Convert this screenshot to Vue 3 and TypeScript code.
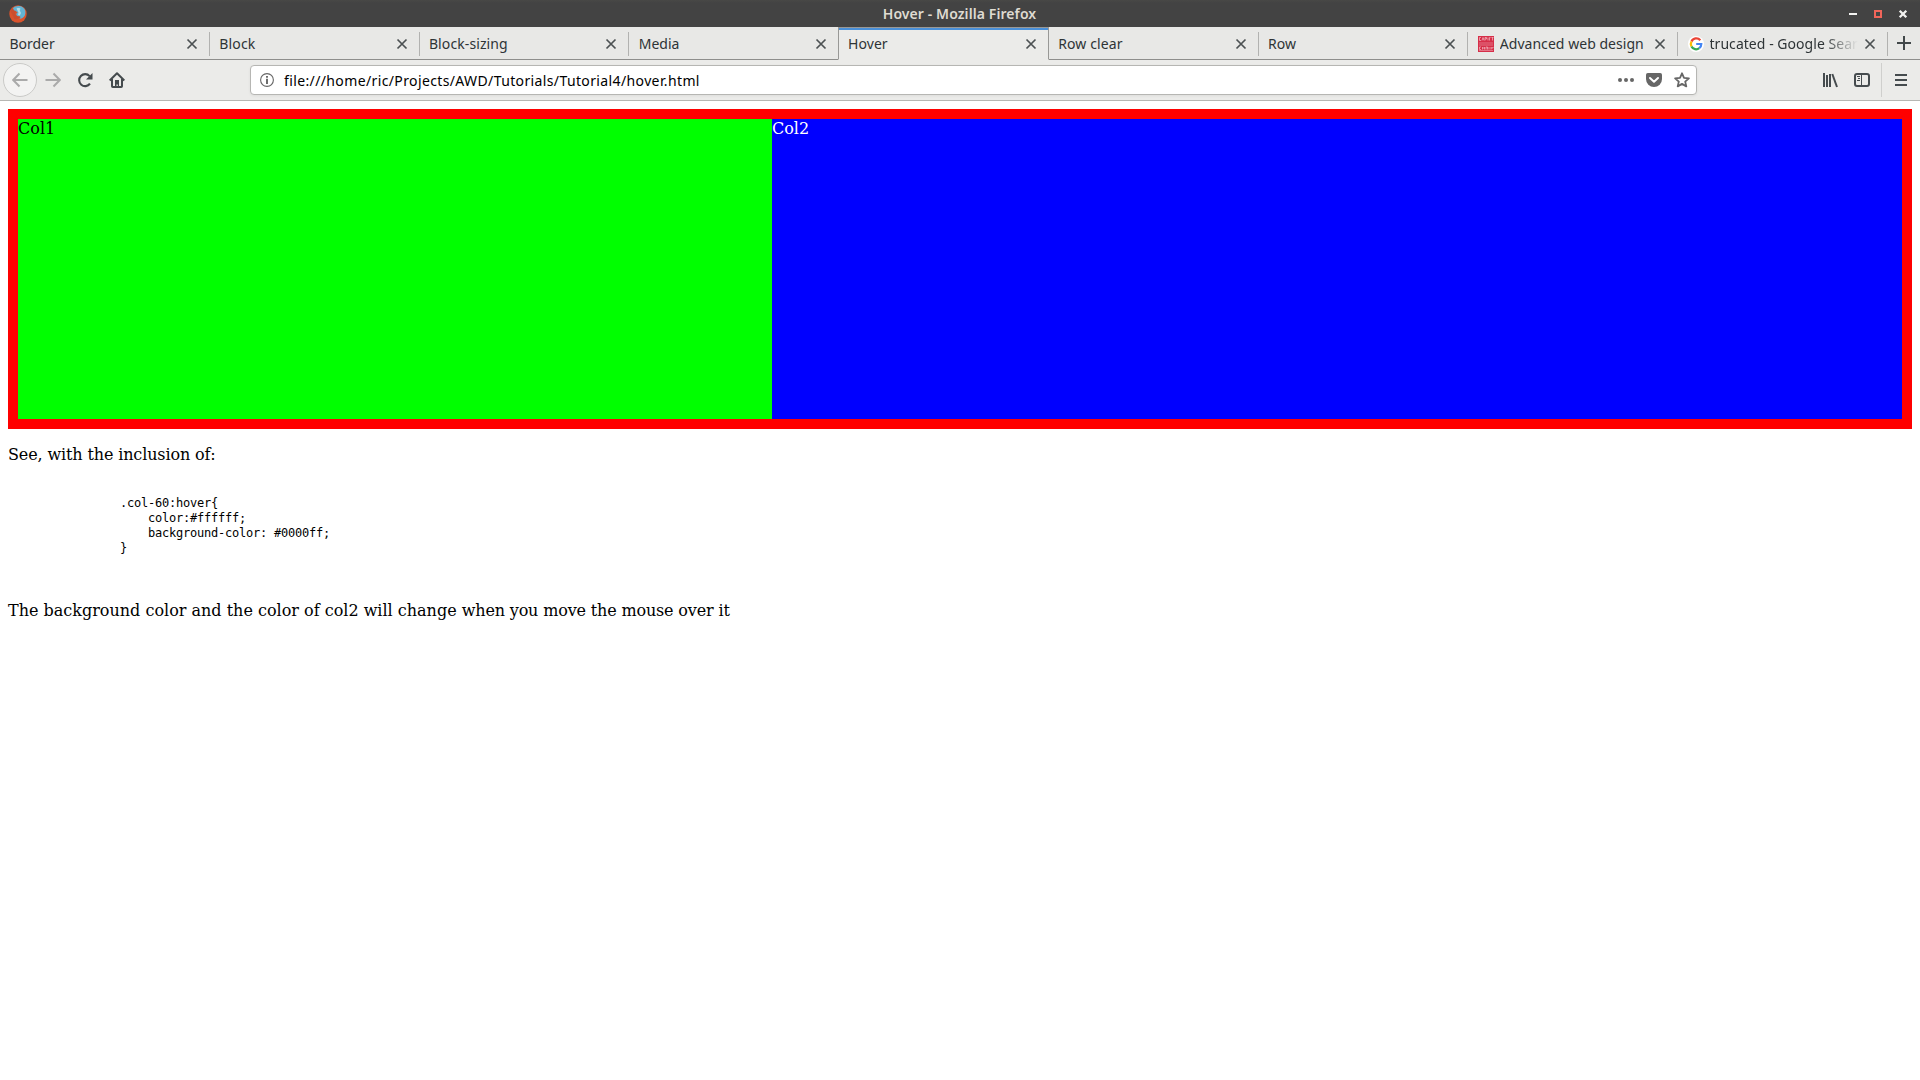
<script setup lang="ts">
interface Tab {
  title: string
  icon?: 'cardiff' | 'google'
  active?: boolean
  spacing: number
}

const tabs: Tab[] = [
  { title: 'Border', spacing: 0 },
  { title: 'Block', spacing: 0.2 },
  { title: 'Block-sizing', spacing: 0.1 },
  { title: 'Media', spacing: 0 },
  { title: 'Hover', active: true, spacing: 0.05 },
  { title: 'Row clear', spacing: 0.12 },
  { title: 'Row', spacing: 0.1 },
  { title: 'Advanced web design', icon: 'cardiff', spacing: 0.04 },
  { title: 'trucated - Google Search', icon: 'google', spacing: 0.04 },
]

const code = `
                .col-60:hover{
                    color:#ffffff;
                    background-color: #0000ff;
                }
            `
</script>

<template>
  <div class="window">
    <header class="titlebar">
      <svg class="firefox" width="18" height="18" viewBox="0 0 18 18">
        <circle cx="9" cy="9" r="8.7" fill="#d9532c" />
        <path d="M4 3.200C6 .8 11 .1 14 2.500c2.500 1.800 3 5 1.800 8-1 2-3 3.500-5.500 3.300 1-.8 1.200-1.600.9-2.400-1.800.5-3.600-.3-3.900-1.800-.3-1 .5-1.500 1.500-1.500L7.500 6.500 5 6z" fill="#62b4d4" />
        <path d="M7.500 3.500c2-1 3.500-.4 4.300.6-1 .3-1.300 1-.8 1.800l1 2-1.200 2.500-1.800-.4.500-2.600z" fill="#b4dce6" />
        <path d="M1.200 5.500c.8-1 1.500-1.700 2.700-2l.8 1.700 2.500.8L6 8c-.3 3 2.500 4 5 3.200-1 2.500-3.200 3.400-5.500 2.700z" fill="#c94f30" />
      </svg>
      <span class="window-title">Hover - Mozilla Firefox</span>
      <svg class="controls" width="62" height="12" viewBox="0 0 62 12">
        <path d="M1 6h8" stroke="#f2f2f0" stroke-width="2" />
        <rect x="27.500" y="3.500" width="5" height="5" fill="none" stroke="#f0655a" stroke-width="3" />
        <rect x="28" y="4" width="4" height="4" fill="#454545" />
        <path d="M51.700 2.700l6.600 6.600M58.300 2.700l-6.600 6.600" stroke="#f2f2f0" stroke-width="2.300" />
      </svg>
    </header>

    <nav class="tabstrip">
      <div v-for="tab in tabs" :key="tab.title" class="tab" :class="{ active: tab.active }">
        <svg v-if="tab.icon === 'cardiff'" class="favicon" width="16" height="16" viewBox="0 0 16 16">
          <rect width="16" height="16" fill="#d62f49" />
          <path d="M1 7h14M1 9h14M1 14.500h14" stroke="#e78795" stroke-width=".8" />
          <path d="M3 1.500H1.500v3H3M4 4.500l1-3 1 3M7 4.500v-3h1.500v1.500H7M10 1.500v3M11.500 4.500v-3h1M13.500 1.500h2M14.500 1.500v3M3 11H1.500v2.500H3M4.500 11v2.500M6.500 11v2.500M4.500 12h2M8 13.500V11h1.500v2.500M11 11v2.500M13 11v2.500M13 12h2V11" fill="none" stroke="#f1b5bd" stroke-width=".75" />
        </svg>
        <svg v-else-if="tab.icon === 'google'" class="favicon" width="16" height="16" viewBox="0 0 16 16">
          <circle cx="8" cy="8" r="8" fill="#fff" />
          <path d="M12.300 4.200A5.200 5.200 0 0 0 3.500 5.500" fill="none" stroke="#ea4335" stroke-width="2.300" />
          <path d="M3.500 5.500a5.200 5.200 0 0 0 0 5" fill="none" stroke="#fbbc05" stroke-width="2.300" />
          <path d="M3.500 10.500a5.200 5.200 0 0 0 7.800 1.700" fill="none" stroke="#34a853" stroke-width="2.300" />
          <path d="M8.200 8h5.100c0 1.700-.7 3.200-2 4.200" fill="none" stroke="#4285f4" stroke-width="2.200" />
        </svg>
        <span class="tab-title" :class="{ fade: tab.icon === 'google' }" :style="{ letterSpacing: tab.spacing + 'px' }">{{ tab.title }}</span>
        <svg class="close" width="12" height="12" viewBox="0 0 12 12">
          <path d="M1.500 1.500l9 9M10.500 1.500l-9 9" stroke="#4c5153" stroke-width="1.700" />
        </svg>
      </div>
      <div class="new-tab">
        <svg width="14" height="14" viewBox="0 0 14 14"><path d="M7 0v14M0 7h14" stroke="#42484a" stroke-width="2" /></svg>
      </div>
    </nav>

    <div class="toolbar">
      <span class="back">
        <svg width="16" height="16" viewBox="0 0 16 16"><path d="M15.500 8H1.500M7.500 1.500L1.200 8l6.300 6.500" fill="none" stroke="#aaa" stroke-width="2" /></svg>
      </span>
      <svg class="forward" width="16" height="16" viewBox="0 0 16 16"><path d="M.5 8h14M8.500 1.500L14.800 8l-6.300 6.500" fill="none" stroke="#aaa" stroke-width="2" /></svg>
      <svg class="reload" width="16" height="16" viewBox="0 0 16 16">
        <path d="M13 11.700a6 6 0 1 1-.4-7.600" fill="none" stroke="#454b4e" stroke-width="2.100" />
        <path d="M15.500 1v6.500H9z" fill="#454b4e" />
      </svg>
      <svg class="home" width="16" height="16" viewBox="0 0 16 16">
        <path d="M.7 8.500L8 1.300l7.300 7.200M3 7v7.200q0 .8.800.8h8.400q.8 0 .8-.8V7" fill="none" stroke="#454b4e" stroke-width="2" stroke-linejoin="round" />
        <path d="M6 8h4v7H8.800v-2.500H7.500V15H6z" fill="#454b4e" />
      </svg>
      <div class="urlbar">
        <svg width="14" height="14" viewBox="0 0 14 14">
          <circle cx="7" cy="7" r="6.400" fill="none" stroke="#666" stroke-width="1.100" />
          <path d="M7 5.800V11M7 3v1.700" stroke="#666" stroke-width="1.900" />
        </svg>
        <span class="url">file:///home/ric/Projects/AWD/Tutorials/Tutorial4/hover.html</span>
        <svg class="dots" width="16" height="16" viewBox="0 0 16 16" fill="#666"><circle cx="2" cy="8" r="2" /><circle cx="8" cy="8" r="2" /><circle cx="14" cy="8" r="2" /></svg>
        <svg class="pocket" width="16" height="16" viewBox="0 0 16 16">
          <path d="M1.800 1h12.400Q16 1 16 2.800V7a8 8 0 0 1-16 0V2.800Q0 1 1.800 1z" fill="#666" />
          <path d="M4 6l4 3.700L12 6" fill="none" stroke="#fff" stroke-width="2" stroke-linecap="round" stroke-linejoin="round" />
        </svg>
        <svg class="star" width="16" height="16" viewBox="0 0 16 16"><path d="M8 1.300l2 4.500 4.900.5-3.700 3.300 1.100 4.800L8 11.900l-4.300 2.500 1.100-4.800L1.100 6.300 6 5.800z" fill="none" stroke="#666" stroke-width="1.800" stroke-linejoin="round" /></svg>
      </div>
      <svg class="library" width="16" height="16" viewBox="0 0 16 16"><path d="M2 1v14M5 3v12M8 2v13" stroke="#454b4e" stroke-width="2" /><path d="M10.300 2l4.700 13" stroke="#454b4e" stroke-width="2" /></svg>
      <svg class="sidebar" width="16" height="16" viewBox="0 0 16 16">
        <rect x="1" y="2" width="14" height="12" rx="2" fill="none" stroke="#454b4e" stroke-width="2" />
        <path d="M7.500 2v12" stroke="#454b4e" stroke-width="1" />
        <path d="M3 4.500h3M4 6.500h2M3 8.500h3" stroke="#454b4e" stroke-width="1" />
      </svg>
      <span class="menu">
        <svg width="12" height="14" viewBox="0 0 12 14"><path d="M0 2h12M0 7h12M0 12h12" stroke="#454b4e" stroke-width="2" /></svg>
      </span>
    </div>

    <main class="page">
      <div class="row">
        <div class="col-40">Col1</div>
        <div class="col-60">Col2</div>
      </div>
      <p class="intro">See, with the inclusion of:</p>
      <pre>{{ code }}</pre>
      <p>The background color and the color of col2 will change <span class="tight">when you move the mouse over it</span></p>
    </main>
  </div>
</template>

<style>
body {
  margin: 0;
  background: #fff;
}
</style>

<style scoped>
.window {
  height: 1080px;
  overflow: hidden;
  font-family: "Noto Sans", "Open Sans", sans-serif;
}
.window svg {
  display: block;
  flex: none;
}
.titlebar {
  display: grid;
  grid-template-columns: 1fr auto 1fr;
  align-items: center;
  height: 27px;
  box-sizing: border-box;
  padding: 0 10px 0 9px;
  background: linear-gradient(#484846, #434343 3px);
}
.window-title {
  color: #dfdbd2;
  font-size: 14px;
  font-weight: 600;
  letter-spacing: 0.090px;
  line-height: 27px;
  white-space: nowrap;
}
.controls {
  justify-self: end;
  margin-top: 1px;
}
.tabstrip {
  display: flex;
  height: 33px;
  background: #e8e8e6;
}
.tab {
  flex: none;
  display: flex;
  align-items: center;
  width: 209.780px;
  box-sizing: border-box;
  padding: 2px 12px 0 9.400px;
  border-bottom: 1px solid #8e8e8c;
  color: #2e3436;
  background: linear-gradient(#b2b2b0, #b2b2b0) right 5px / 1px 24px no-repeat;
}
.tab:has(+ .active) {
  background: none;
}
.tab.active {
  border: 1px solid #989896;
  border-bottom-color: #ebebe9;
  margin-left: -1px;
  width: 210.780px;
  box-shadow: inset 0 2px #4a90d9;
  background: #ebebe9;
  padding: 1px 11px 0 9px;
}
.favicon {
  margin-right: 6px;
}
.tab-title {
  flex: 1;
  min-width: 0;
  overflow: hidden;
  white-space: nowrap;
  font-size: 14px;
  line-height: 22px;
}
.fade {
  -webkit-mask-image: linear-gradient(to right, #000 calc(100% - 34px), transparent);
  mask-image: linear-gradient(to right, #000 calc(100% - 34px), transparent);
}
.close {
  margin-left: 6px;
}
.new-tab {
  flex: 1;
  display: flex;
  align-items: center;
  justify-content: center;
  border-bottom: 1px solid #8e8e8c;
}
.toolbar {
  display: flex;
  align-items: center;
  height: 41px;
  box-sizing: border-box;
  border-bottom: 1px solid #b6b6b3;
  background: #ebebe9;
}
.back {
  display: flex;
  align-items: center;
  justify-content: center;
  width: 34px;
  height: 34px;
  box-sizing: border-box;
  margin-left: 3px;
  border: 1px solid #cacac8;
  border-radius: 50%;
  background: #f3f3f2;
}
.forward {
  margin-left: 8px;
}
.reload {
  margin-left: 16px;
}
.home {
  margin-left: 16px;
}
.urlbar {
  display: flex;
  align-items: center;
  width: 1447px;
  height: 30px;
  box-sizing: border-box;
  margin-left: 125px;
  padding: 0 6px 0 9px;
  border: 1px solid #b6b6b3;
  border-radius: 4px;
  background: #fff;
  box-shadow: 0 1px 3px rgba(0, 0, 0, 0.060);
}
.url {
  flex: 1;
  margin-left: 10px;
  padding-top: 1px;
  color: #000;
  font-size: 14px;
  letter-spacing: 0.375px;
  line-height: 23px;
  white-space: nowrap;
}
.pocket {
  margin-left: 12px;
}
.star {
  margin-left: 12px;
}
.library {
  margin-left: 125px;
}
.sidebar {
  margin-left: 16px;
}
.menu {
  display: flex;
  align-items: center;
  height: 34px;
  margin-left: 11px;
  padding-left: 13px;
  border-left: 1px solid #cfcfcd;
}
.page {
  padding: 8px;
  color: #000;
  font-family: "DejaVu Serif", serif;
  font-size: 16px;
  line-height: 19px;
}
.row {
  display: flex;
  height: 300px;
  border: 10px solid #f00;
}
.col-40 {
  width: 40%;
  background: #0f0;
}
.col-60 {
  width: 60%;
  box-sizing: border-box;
  padding-left: 0.400px;
  color: #fff;
  background: #00f;
}
p {
  margin: 16px 0;
}
.intro {
  letter-spacing: -0.130px;
}
.tight {
  letter-spacing: -0.160px;
}
pre {
  margin: 17px 0 16px;
  padding-bottom: 14px;
  font-family: "DejaVu Sans Mono", monospace;
  font-size: 12px;
  line-height: 15px;
  letter-spacing: -0.224px;
}
</style>
